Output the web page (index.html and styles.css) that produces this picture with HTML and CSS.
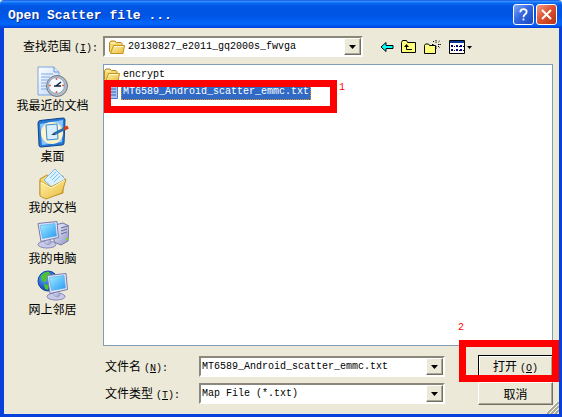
FILE: index.html
```html
<!DOCTYPE html>
<html lang="zh-CN">
<head>
<meta charset="utf-8">
<title>Open Scatter file ...</title>
<link rel="stylesheet" href="styles.css">
</head>
<body>
<svg class="defs" aria-hidden="true">
  <defs>
    <linearGradient id="paper" x1="0" y1="0" x2="1" y2="1"><stop offset="0" stop-color="#fff"/><stop offset="1" stop-color="#b9d5f7"/></linearGradient>
    <linearGradient id="screen" x1="0" y1="0" x2="1" y2="1"><stop offset="0" stop-color="#a5eeff"/><stop offset="1" stop-color="#259af4"/></linearGradient>
    <linearGradient id="gold" x1="0" y1="0" x2="1" y2="1"><stop offset="0" stop-color="#fff4a8"/><stop offset="1" stop-color="#e9b93c"/></linearGradient>
    <linearGradient id="case" x1="0" y1="0" x2="1" y2="1"><stop offset="0" stop-color="#f2f3ff"/><stop offset="1" stop-color="#8f93c4"/></linearGradient>
    <radialGradient id="globe" cx=".35" cy=".35" r=".7"><stop offset="0" stop-color="#5caaff"/><stop offset="1" stop-color="#0735a4"/></radialGradient>
    <symbol id="folder" viewBox="0 0 16 16">
      <path d="M.5 12.500V3.500L2 2h4l1.500 1.500H12l1 1V12.500l-1 1H1.500z" fill="#f7d770" stroke="#b58a21"/>
      <path d="M1.500 14.500L4.500 6.500H15.500L14 14.500z" fill="url(#gold)" stroke="#c39424"/>
      <path d="M2 4h4M5 7.500h9" stroke="#fffbd5"/>
    </symbol>
    <symbol id="monitor" viewBox="0 0 24 28">
      <ellipse cx="10" cy="24" rx="9" ry="3.500" fill="#c8cae8" stroke="#8587b5"/>
      <path d="M8 18l5-1 1 6q-3 3-6 0z" fill="url(#case)" stroke="#9496bd" stroke-width=".6"/>
      <path d="M1 3L20 1l1.500 16L4 21z" fill="#e3e5f8" stroke="#777aac"/>
      <path d="M3 5l15-2 1.500 12.500L5.500 18z" fill="url(#screen)" stroke="#4ca8e8" stroke-width=".6"/>
    </symbol>
  </defs>
</svg>
<main class="dialog">
  <header class="titlebar">
    <h1>Open Scatter file ...</h1>
    <button class="caption help" aria-label="Help"><svg viewBox="0 0 21 21"><path d="M7 8q0-3.500 3.500-3.500T14 7.500q0 1.700-2 3-1.500 1-1.500 3" fill="none" stroke="#fff" stroke-width="2"/><path d="M9.500 15h2v2h-2z" fill="#fff"/></svg></button>
    <button class="caption close" aria-label="Close"><svg viewBox="0 0 21 21"><path d="M5.500 5.500l10 10M15.500 5.500l-10 10" stroke="#fff" stroke-width="2.200"/></svg></button>
  </header>
  <div class="client">
    <div class="lookin">
      <label class="lookin-label" for="look">查找范围<span class="key">(<u>I</u>):</span></label>
      <div class="combo lookin-combo">
        <svg class="combo-icon" viewBox="0 0 16 16"><use href="#folder"/></svg>
        <select id="look"><option>20130827_e2011_gq2000s_fwvga</option></select>
        <span class="arrow"><svg viewBox="0 0 7 4"><path d="M0 0h7L3.500 4z"/></svg></span>
      </div>
      <div class="tools">
        <button aria-label="Back"><svg width="14" height="12" viewBox="0 0 14 12"><path d="M1 6l5-4.500v3h7v3H6v3z" fill="#0ff" stroke="#000"/></svg></button>
        <button aria-label="Up one level"><svg width="16" height="14" viewBox="0 0 16 14"><path d="M.5 12.500v-10l1-2h4l1 2h8v10z" fill="#ffff7b" stroke="#000"/><path d="M5.500 5v4.500H11" fill="none" stroke="#000"/><path d="M3 7L5.500 4 8 7z"/></svg></button>
        <button aria-label="Create new folder"><svg width="18" height="16" viewBox="0 0 18 16"><path d="M.5 14.500v-8l1-1.500h3l1 1.500h6v8z" fill="#ffff7b" stroke="#000"/><path d="M12 1v3M12 7v3M8 5.500h2M14 5.500h3M9 2l1.500 1.500M15.500 2L14 3.500M14 7l2 2" stroke="#000" stroke-dasharray="1.500 .7"/></svg></button>
        <button aria-label="View menu"><svg width="24" height="14" viewBox="0 0 24 14"><path d="M.5.500h15v13H.5z" fill="#fff" stroke="#000"/><path d="M1 1h14v2H1z" fill="#0a3a95"/><path d="M2 5h2v2H2zM7 5h2v2H7zM11 5h2v2h-2zM2 9h2v2H2zM7 9h2v2H7zM11 9h2v2h-2z" fill="#00007b"/><path d="M5 6.500h1M10 6.500h1M14 6.500h1M5 10.500h1M10 10.500h1M14 10.500h1" stroke="#000"/><path d="M18 6h5l-2.500 3z"/></svg></button>
      </div>
    </div>
    <nav class="places">
      <a href="#recent"><svg viewBox="0 0 32 32"><path d="M1 1h16l5 5v23H1z" fill="url(#paper)" stroke="#7da5df"/><path d="M17 1v5h5" fill="#d8e9ff" stroke="#6b97d8"/><path d="M4 8h12M4 11h9M4 14h7M4 17h5M4 20h5M4 23h6" stroke="#7fa8e6"/><circle cx="20" cy="20" r="10.500" fill="#b7bcc4" stroke="#727781"/><circle cx="19.500" cy="19.500" r="8" fill="#f3faff" stroke="#88a6c7"/><path d="M19 20l5-4M17 20h7" stroke="#17263e" stroke-width="1.600"/><path d="M19.500 12v2M19.500 25v2M12 19.500h2M25 19.500h2" stroke="#ef6633" stroke-width="1.500"/></svg>我最近的文档</a>
      <a href="#desktop"><svg viewBox="0 0 32 32"><path d="M1 6q0-2 2-2.500L26 1q2 0 2 2l-1 23q0 2-2 2L4 30q-2 0-2-2z" fill="#2879d3" stroke="#0c458f"/><path d="M3 7l23-4-1 22-20 3z" fill="#8dc7ff"/><ellipse cx="15" cy="16" rx="11" ry="11" fill="#fff3c7"/><path d="M9 8l11-1 1 15-11 1z" fill="#d9efff" stroke="#388bd1"/><path d="M17 17l10-5" stroke="#2e6faf" stroke-width="3"/><path d="M27 12l4-2" stroke="#d63a1d" stroke-width="3.500"/><path d="M14 18l3-2 1 2z" fill="#234"/></svg>桌面</a>
      <a href="#documents"><svg viewBox="0 0 32 32"><path d="M3 11l7-4 5 3 11-2v17L9 30l-6-3z" fill="#f6d466" stroke="#bd922e"/><path d="M7 12L18 1l10 10-9 12z" fill="#d9f0ff" stroke="#80b8e4"/><path d="M13 10l6-6M15 12l6-6M17 14l6-6" stroke="#83c3ef"/><path d="M3 13l11 6 15-8-4 14-16 6-6-3z" fill="url(#gold)" stroke="#c2952c"/><path d="M4 14l10 6L28 12" fill="none" stroke="#fffbd0"/></svg>我的文档</a>
      <a href="#computer"><svg viewBox="0 0 32 32"><path d="M18 6l8-2 6 3-1 15-7 4-7-3z" fill="url(#case)" stroke="#7376a4"/><path d="M24 9l7-2M24 12l6-2M24 15l6-2" stroke="#666b9a"/><path d="M29 19h2v2h-2z" fill="#70dc1b"/><use href="#monitor" x="0" y="1" width="24" height="29"/></svg>我的电脑</a>
      <a href="#network"><svg viewBox="0 0 32 32"><circle cx="11" cy="11" r="10" fill="url(#globe)" stroke="#1747a8"/><path d="M4 6q5-5 8-4l2 4-4 2-1 4-4-1zM7 14l5 1-1 5-3-1z" fill="#4bc52c"/><use href="#monitor" x="9" y="2" width="24" height="29"/></svg>网上邻居</a>
    </nav>
    <ul class="files">
      <li><svg class="file-icon" viewBox="0 0 16 16"><use href="#folder"/></svg><span class="name">encrypt</span></li>
      <li class="marked"><svg class="file-icon" viewBox="0 0 16 16"><path d="M2.500 1.500h11v13h-11z" fill="#a8c4ee" stroke="#587bc0"/><path d="M5 5h7M5 8h7M5 11h7" stroke="#3264b4"/></svg><span class="name selected">MT6589_Android_scatter_emmc.txt</span><span class="mark mark-file"><b>1</b></span></li>
    </ul>
    <form class="fields">
      <label for="filename">文件名<span class="key">(<u>N</u>):</span></label>
      <div class="combo">
        <input id="filename" type="text" value="MT6589_Android_scatter_emmc.txt">
        <button type="button" class="arrow" aria-label="Show names"><svg viewBox="0 0 7 4"><path d="M0 0h7L3.500 4z"/></svg></button>
      </div>
      <div class="action"><button type="button" class="push default">打开<span class="key">(<u>O</u>)</span></button><span class="mark mark-open"><b>2</b></span></div>
      <label for="filetype">文件类型<span class="key">(<u>T</u>):</span></label>
      <div class="combo">
        <select id="filetype"><option>Map File (*.txt)</option></select>
        <span class="arrow"><svg viewBox="0 0 7 4"><path d="M0 0h7L3.500 4z"/></svg></span>
      </div>
      <div class="action"><button type="button" class="push">取消</button></div>
    </form>
    <svg class="grip" viewBox="0 0 12 12"><path d="M0 12L12 0M4 12l8-8M8 12l4-4" stroke="#aaa58f" stroke-width="2"/><path d="M-1 11L11-1M3 11l8-8M7 11l4-4" stroke="#fff"/></svg>
  </div>
</main>
</body>
</html>
```

FILE: styles.css
```css
* { box-sizing: border-box; }

body {
  margin: 0;
  background: #ece9d8;
  color: #000;
  font: 12px/17px "Noto Sans CJK SC", sans-serif;
}

button, input, select {
  margin: 0;
  padding: 0;
  border: 0;
  border-radius: 0;
  color: inherit;
  font: inherit;
}

svg { display: block; }

.defs { position: absolute; width: 0; height: 0; }

.dialog {
  display: flex;
  flex-direction: column;
  min-height: 100vh;
}

.titlebar {
  display: flex;
  align-items: center;
  gap: 2px;
  height: 28px;
  padding: 0 5px 0 8px;
  border-radius: 4px 4px 0 0;
  background: linear-gradient(#0831d9 0, #3b9bff 1px, #0a6cf4 3px, #0055e3 6px, #0055e5 16px, #0264fa 23px, #0160f5 25px, #003dd7 28px);
}

.titlebar h1 {
  flex: 1;
  margin: 0;
  padding-top: 3px;
  color: #fff;
  font: bold 13px/20px "Liberation Mono", monospace;
  text-shadow: 1px 1px #0a2a8c;
}

.caption {
  width: 21px;
  height: 21px;
  border: 1px solid #fff;
  border-radius: 3px;
}

.caption svg { width: 19px; height: 19px; }
.help { background: linear-gradient(135deg, #82a9f4, #3468e0 45%, #1748c2); }
.close { background: linear-gradient(135deg, #f0a087, #de5333 45%, #b93211); }

.client {
  position: relative;
  flex: 1;
  display: grid;
  grid-template: auto 1fr auto / 99px 1fr;
  row-gap: 7px;
  padding: 8px 6px 9px 0;
  border: solid #0840dc;
  border-width: 0 3px 3px 4px;
}

.lookin {
  grid-column: 1 / -1;
  display: flex;
  align-items: center;
}

.lookin-label { width: 99px; padding-left: 19px; line-height: 15px; }

.key, .files, .combo input, .combo select, .mark {
  font-family: "Liberation Mono", monospace;
  font-size: 10px;
}

.key { margin-left: 3px; }

.combo {
  position: relative;
  display: flex;
  align-items: center;
  min-width: 0;
  height: 21px;
  border: 2px solid;
  border-color: #8b887b #fff #fff #8b887b;
  background: #fff;
}

.lookin-combo { flex: 0 1 260px; }

.combo-icon { width: 16px; height: 16px; margin: 0 3px 0 4px; }

.combo input, .combo select {
  flex: 1;
  min-width: 0;
  height: 17px;
  background: #fff;
  appearance: none;
  outline: 0;
}

.arrow {
  display: grid;
  place-items: center;
  width: 17px;
  height: 17px;
  border: 1px solid;
  border-color: #fff #716f64 #716f64 #fff;
  background: #ece9d8;
  box-shadow: inset -1px -1px #aca899;
  pointer-events: none;
}

.arrow svg { width: 7px; height: 4px; }

.tools {
  display: flex;
  align-items: center;
  gap: 7px;
  margin-left: 17px;
}

.tools button { background: none; }

.places {
  grid-row: 2 / 4;
  display: flex;
  flex-direction: column;
  padding: 2px 2px 0 0;
}

.places a {
  display: flex;
  flex-direction: column;
  align-items: center;
  height: 51px;
  color: inherit;
  line-height: 14px;
  text-decoration: none;
}

.places svg { width: 32px; height: 32px; }

.files {
  margin: 0;
  padding: 1px 0;
  border: 1px solid #7f9db9;
  background: #fff;
  list-style: none;
}

.files li {
  position: relative;
  display: flex;
  align-items: center;
  gap: 1px;
  height: 17px;
}

.file-icon { width: 16px; height: 16px; }
.name { padding: 0 2px; line-height: 16px; }

.selected {
  outline: 1px dotted #e0912f;
  outline-offset: -1px;
  background: #316ac5;
  color: #fff;
}

.mark {
  position: absolute;
  border: 7px solid #f00;
  color: #f00;
  pointer-events: none;
}

.mark b {
  position: absolute;
  font-weight: normal;
  line-height: 12px;
}

.mark-file { top: -3px; left: 0; width: 233px; height: 33px; }
.mark-file b { top: -5px; left: 228px; }
.mark-open { top: -15px; right: -6px; width: 100px; height: 42px; }
.mark-open b { top: -25px; left: -8px; }

.fields {
  display: grid;
  grid-template-columns: 96px 1fr 75px;
  align-items: center;
  gap: 4px 0;
  margin: 2px 0 0;
}

.fields label { padding-left: 2px; }
.fields .combo { margin-right: 33px; }
.fields .combo input, .fields .combo select { padding: 0 1px; }

.action { position: relative; }

.push {
  display: block;
  width: 100%;
  height: 23px;
  border: 1px solid;
  border-color: #fff #716f64 #716f64 #fff;
  background: #ece9d8;
  box-shadow: inset -1px -1px #aca899;
}

.default {
  border-color: #000;
  box-shadow: inset 1px 1px #fff, inset -1px -1px #aca899;
}

.grip {
  position: absolute;
  right: 0;
  bottom: 0;
  width: 12px;
  height: 12px;
}
```
